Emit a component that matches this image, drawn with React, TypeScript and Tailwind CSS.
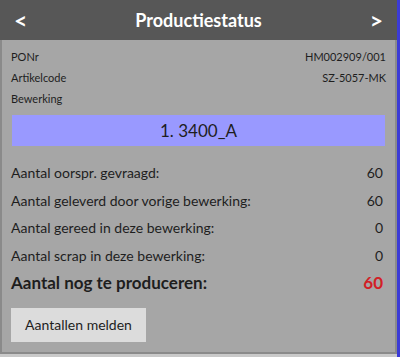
import React from 'react';

interface InfoRowProps {
  label: string;
  value: string;
}

const InfoRow: React.FC<InfoRowProps> = ({ label, value }) => (
  <div className="flex h-[21px] items-center justify-between text-[11px] text-[#1e1e1e]">
    <span>{label}</span>
    <span>{value}</span>
  </div>
);

interface CountRowProps {
  label: string;
  value: string;
  strong?: boolean;
}

const CountRow: React.FC<CountRowProps> = ({ label, value, strong }) => (
  <div
    className={`flex h-[27.5px] items-center justify-between pr-[3px] ${
      strong ? 'text-[17px] font-bold' : 'text-[14px]'
    } text-[#1e1e1e]`}
  >
    <span>{label}</span>
    <span className={strong ? 'text-[#d21f26]' : ''}>{value}</span>
  </div>
);

export default function App() {
  return (
    <div
      className="flex h-[357px] w-[400px] bg-[#c9c9c9]"
      style={{ fontFamily: 'Lato, "Noto Sans", sans-serif' }}
    >
      <div className="flex h-[354px] w-[397px] flex-col">
        <div className="flex h-[40px] items-center justify-between bg-[#575757] px-[14px] text-white">
          <span className="text-[23px] font-bold leading-none">&lt;</span>
          <span className="text-[18px] font-bold">Productiestatus</span>
          <span className="text-[23px] font-bold leading-none">&gt;</span>
        </div>
        <div className="flex flex-1 flex-col border-x-2 border-b-2 border-[#8a8a8a] bg-[#a6a6a6] px-[9px] pt-[7px]">
          <InfoRow label="PONr" value="HM002909/001" />
          <InfoRow label="Artikelcode" value="SZ-5057-MK" />
          <InfoRow label="Bewerking" value="" />
          <div className="mx-[1px] mt-[5px] flex h-[31px] items-center justify-center bg-[#9999ff] text-[17px] text-[#1e1e1e]">
            1. 3400_A
          </div>
          <div className="mt-[13px] flex flex-col">
            <CountRow label="Aantal oorspr. gevraagd:" value="60" />
            <CountRow label="Aantal geleverd door vorige bewerking:" value="60" />
            <CountRow label="Aantal gereed in deze bewerking:" value="0" />
            <CountRow label="Aantal scrap in deze bewerking:" value="0" />
            <CountRow label="Aantal nog te produceren:" value="60" strong />
          </div>
          <button className="mt-[11px] flex h-[34px] w-[135px] items-center justify-center bg-[#dcdcdc] text-[14px] text-[#1e1e1e]">
            Aantallen melden
          </button>
        </div>
      </div>
      <div className="h-full w-[3px] bg-[#3b3bd6]" />
    </div>
  );
}
